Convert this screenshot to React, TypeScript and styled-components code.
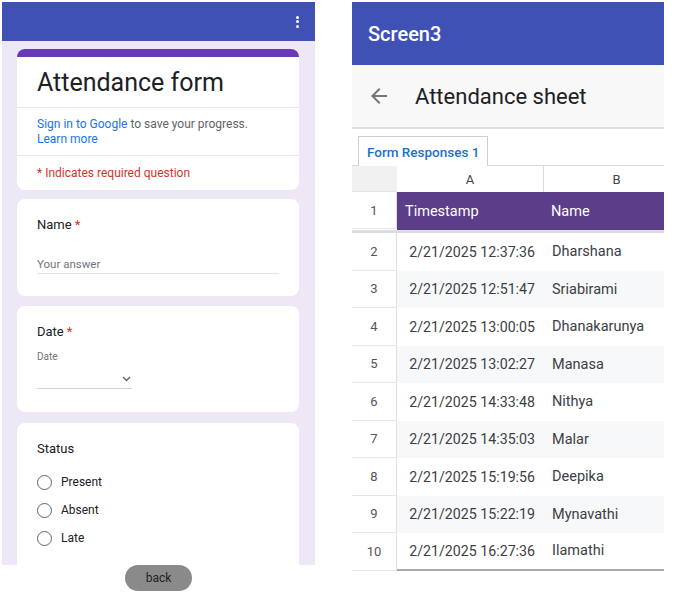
import React from 'react';
import styled, { createGlobalStyle } from 'styled-components';

const Global = createGlobalStyle`
  html, body { margin: 0; padding: 0; background: #ffffff; }
  body { font-family: Roboto, "Noto Sans", Arial, sans-serif; -webkit-font-smoothing: antialiased; }
  * { box-sizing: border-box; }
`;

const Page = styled.div`
  width: 682px;
  height: 597px;
  display: flex;
  align-items: flex-start;
  padding-top: 2px;
  overflow: hidden;
`;

const Phone = styled.div<{ $left: number; $width: number }>`
  margin-left: ${p => p.$left}px;
  width: ${p => p.$width}px;
  display: flex;
  flex-direction: column;
  overflow: hidden;
`;

/* ---------- Left: form ---------- */

const FormBar = styled.div`
  height: 39px;
  background: #3f51b5;
  display: flex;
  align-items: center;
  justify-content: flex-end;
  padding-right: 16px;
`;

const Kebab = styled.div`
  display: flex;
  flex-direction: column;
  gap: 1.5px;
  span {
    width: 3px;
    height: 3px;
    border-radius: 50%;
    background: #ffffff;
  }
`;

const FormBody = styled.div`
  height: 524px;
  background: #ede7f6;
  padding: 8px 16px 0 15px;
  overflow: hidden;
  display: flex;
  flex-direction: column;
`;

const Card = styled.div<{ $gap: number; $height?: number }>`
  background: #ffffff;
  border-radius: 8px;
  overflow: hidden;
  margin-bottom: ${p => p.$gap}px;
  flex-shrink: 0;
  ${p => (p.$height ? `height: ${p.$height}px;` : '')}
  display: flex;
  flex-direction: column;
`;

const QuestionCard = styled(Card)`
  padding: 17px 20px 0 20px;
`;

const TopStrip = styled.div`
  height: 8px;
  background: #673ab7;
`;

const TitleSection = styled.div`
  height: 50px;
  display: flex;
  align-items: center;
  padding-left: 20px;
  font-size: 25px;
  color: #202124;
`;

const Divider = styled.div`
  height: 1px;
  background: #e8e8ea;
`;

const InfoSection = styled.div`
  padding: 9px 20px 8px 20px;
  font-size: 12px;
  line-height: 15px;
  color: #5f6368;
`;

const Link = styled.a`
  color: #1a73e8;
  text-decoration: none;
`;

const RequiredSection = styled.div`
  height: 34px;
  display: flex;
  align-items: center;
  padding-left: 20px;
  padding-bottom: 1px;
  font-size: 12px;
  color: #d0342c;
`;

const QLabel = styled.div`
  font-size: 13px;
  line-height: 18px;
  color: #202124;
`;

const Star = styled.span`
  color: #d93025;
  margin-left: 3px;
`;

const AnswerLine = styled.div`
  margin-top: 22px;
  font-size: 11.5px;
  line-height: 16px;
  color: #70757a;
  border-bottom: 1px solid #e4e4e6;
  padding-bottom: 1px;
`;

const SmallLabel = styled.div`
  margin-top: 10px;
  font-size: 10px;
  line-height: 12px;
  color: #70757a;
`;

const DateField = styled.div`
  width: 95px;
  height: 26px;
  border-bottom: 1px solid #d4d4d8;
  display: flex;
  justify-content: flex-end;
  align-items: flex-end;
  padding: 0 1px 6px 0;
`;

const RadioList = styled.div`
  margin-top: 10px;
  display: flex;
  flex-direction: column;
`;

const RadioRow = styled.label`
  height: 28px;
  display: flex;
  align-items: center;
  font-size: 12px;
  color: #202124;
`;

const RadioCircle = styled.span`
  width: 15px;
  height: 15px;
  border-radius: 50%;
  border: 1.5px solid #5f6368;
  margin-right: 9px;
  flex-shrink: 0;
`;

const FormFooter = styled.div`
  height: 32px;
  display: flex;
  justify-content: center;
  align-items: flex-start;
`;

const BackButton = styled.button`
  width: 67px;
  height: 26px;
  border: none;
  border-radius: 13px;
  background: #8a8a8a;
  color: #222222;
  font-family: Roboto, Arial, sans-serif;
  font-size: 12px;
  padding: 0;
`;

/* ---------- Right: sheet ---------- */

const AppBar = styled.div`
  height: 63px;
  background: #3f51b5;
  display: flex;
  align-items: center;
  padding-left: 16px;
  color: #ffffff;
  font-size: 20px;
  font-weight: 500;
`;

const Toolbar = styled.div`
  height: 64px;
  background: #f8f8f8;
  border-bottom: 2px solid #dedede;
  display: flex;
  align-items: center;
  padding-left: 15px;
`;

const ToolbarTitle = styled.div`
  margin-left: 24px;
  font-size: 22px;
  color: #202124;
`;

const TabBar = styled.div`
  margin-top: 7px;
  height: 30px;
  display: flex;
  align-items: flex-end;
  padding-left: 6px;
  border-bottom: 1px solid #dadada;
`;

const Tab = styled.div`
  height: 30px;
  margin-bottom: -1px;
  background: #ffffff;
  border: 1px solid #cfcfcf;
  border-bottom: none;
  padding: 0 8px;
  display: flex;
  align-items: center;
  font-size: 13.5px;
  font-weight: 500;
  color: #1a73c8;
`;

const Grid = styled.div`
  display: grid;
  grid-template-columns: 45px 146px 146px;
  width: 337px;
`;

const Corner = styled.div`
  height: 26px;
  background: #f1f1f1;
  border-bottom: 1px solid #e4e4e4;
`;

const ColHead = styled.div<{ $divider?: boolean }>`
  height: 26px;
  display: flex;
  align-items: center;
  justify-content: center;
  font-size: 13px;
  color: #444444;
  border-left: ${p => (p.$divider ? '1px solid #dadada' : 'none')};
`;

const RowNum = styled.div<{ $h: number }>`
  height: ${p => p.$h}px;
  display: flex;
  align-items: center;
  justify-content: center;
  font-size: 13px;
  color: #555555;
  background: #ffffff;
  border-right: 1px solid #e0e0e0;
  border-bottom: 1px solid #e6e6e6;
`;

const HeadCell = styled.div`
  height: 38px;
  background: #5b3d89;
  color: #ffffff;
  display: flex;
  align-items: center;
  padding-left: 8px;
  font-size: 14.5px;
`;

const Freeze = styled.div`
  grid-column: 1 / -1;
  height: 3px;
  background: #dcdde1;
`;

const Cell = styled.div<{ $shade: boolean; $right?: boolean; $last: boolean }>`
  height: 37.5px;
  display: flex;
  align-items: center;
  justify-content: ${p => (p.$right ? 'flex-end' : 'flex-start')};
  padding: ${p => (p.$right ? '0 8px 0 0' : '0 0 0 9px')};
  font-size: ${p => (p.$right ? '14.2px' : '14.5px')};
  color: #3c4043;
  background: ${p => (p.$shade ? '#f7f8fa' : '#ffffff')};
  border-bottom: ${p => (p.$last ? '2px solid #a9a9a9' : 'none')};
  white-space: nowrap;
`;

const rows: [string, string][] = [
  ['2/21/2025 12:37:36', 'Dharshana'],
  ['2/21/2025 12:51:47', 'Sriabirami'],
  ['2/21/2025 13:00:05', 'Dhanakarunya'],
  ['2/21/2025 13:02:27', 'Manasa'],
  ['2/21/2025 14:33:48', 'Nithya'],
  ['2/21/2025 14:35:03', 'Malar'],
  ['2/21/2025 15:19:56', 'Deepika'],
  ['2/21/2025 15:22:19', 'Mynavathi'],
  ['2/21/2025 16:27:36', 'Ilamathi'],
];

const ArrowBack = () => (
  <svg width="24" height="24" viewBox="0 0 24 24" fill="#757575">
    <path d="M20 11H7.83l5.59-5.59L12 4l-8 8 8 8 1.41-1.41L7.83 13H20v-2z" />
  </svg>
);

const Chevron = () => (
  <svg width="9" height="6" viewBox="0 0 9 6" fill="none" stroke="#5f6368" strokeWidth="1.3">
    <path d="M1 1l3.5 3.5L8 1" />
  </svg>
);

export default function App() {
  return (
    <>
      <Global />
      <Page>
        <Phone $left={2} $width={313}>
          <FormBar>
            <Kebab>
              <span />
              <span />
              <span />
            </Kebab>
          </FormBar>
          <FormBody>
            <Card $gap={9}>
              <TopStrip />
              <TitleSection>Attendance form</TitleSection>
              <Divider />
              <InfoSection>
                <Link>Sign in to Google</Link> to save your progress.
                <br />
                <Link>Learn more</Link>
              </InfoSection>
              <Divider />
              <RequiredSection>* Indicates required question</RequiredSection>
            </Card>
            <QuestionCard $gap={10} $height={97}>
              <QLabel>
                Name<Star>*</Star>
              </QLabel>
              <AnswerLine>Your answer</AnswerLine>
            </QuestionCard>
            <QuestionCard $gap={11} $height={106}>
              <QLabel>
                Date<Star>*</Star>
              </QLabel>
              <SmallLabel>Date</SmallLabel>
              <DateField>
                <Chevron />
              </DateField>
            </QuestionCard>
            <QuestionCard $gap={0} $height={170}>
              <QLabel>Status</QLabel>
              <RadioList>
                {['Present', 'Absent', 'Late'].map(o => (
                  <RadioRow key={o}>
                    <RadioCircle />
                    {o}
                  </RadioRow>
                ))}
              </RadioList>
            </QuestionCard>
          </FormBody>
          <FormFooter>
            <BackButton>back</BackButton>
          </FormFooter>
        </Phone>

        <Phone $left={37} $width={312}>
          <AppBar>Screen3</AppBar>
          <Toolbar>
            <ArrowBack />
            <ToolbarTitle>Attendance sheet</ToolbarTitle>
          </Toolbar>
          <TabBar>
            <Tab>Form Responses 1</Tab>
          </TabBar>
          <Grid>
            <Corner />
            <ColHead>A</ColHead>
            <ColHead $divider>B</ColHead>
            <RowNum $h={37}>1</RowNum>
            <HeadCell>Timestamp</HeadCell>
            <HeadCell>Name</HeadCell>
            <Freeze />
            {rows.map(([ts, name], i) => {
              const last = i === rows.length - 1;
              const shade = i % 2 === 1;
              return (
                <React.Fragment key={ts}>
                  <RowNum $h={37.5}>{i + 2}</RowNum>
                  <Cell $shade={shade} $right $last={last}>
                    {ts}
                  </Cell>
                  <Cell $shade={shade} $last={last}>
                    {name}
                  </Cell>
                </React.Fragment>
              );
            })}
          </Grid>
        </Phone>
      </Page>
    </>
  );
}
